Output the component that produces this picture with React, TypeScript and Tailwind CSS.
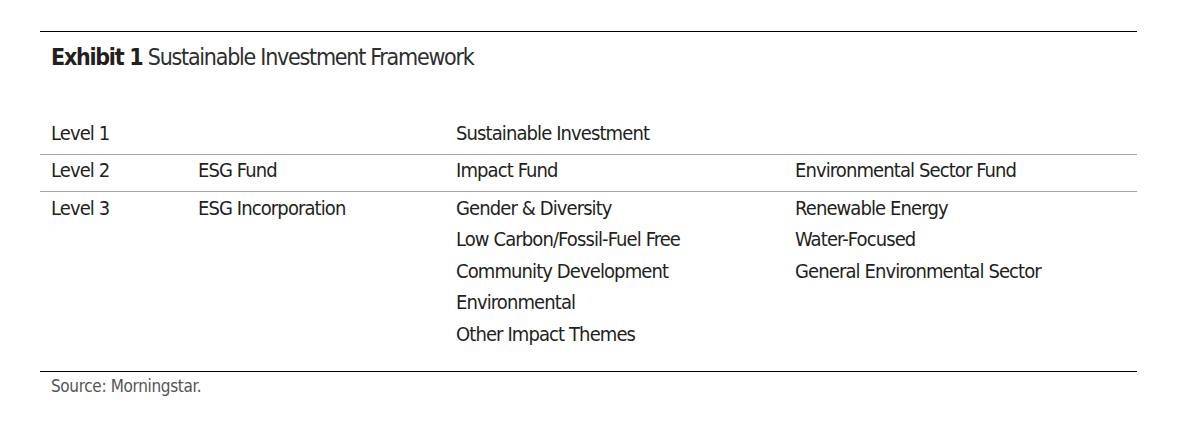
const FONT = "font-['Liberation_Sans_Narrow','DejaVu_Sans_Condensed',Roboto,sans-serif] font-stretch-condensed";

const LEVEL3_IMPACT = [
  "Gender & Diversity",
  "Low Carbon/Fossil-Fuel Free",
  "Community Development",
  "Environmental",
  "Other Impact Themes",
];

const LEVEL3_SECTOR = [
  "Renewable Energy",
  "Water-Focused",
  "General Environmental Sector",
];

function Lines({ items }: { items: string[] }) {
  return (
    <div className="flex flex-col">
      {items.map((item) => (
        <div key={item}>{item}</div>
      ))}
    </div>
  );
}

export default function App() {
  return (
    <div className={`h-[430px] w-[1201px] bg-white ${FONT} text-[#231f20]`}>
      <div className="ml-[40px] w-[1097px] pt-[31px]">
        <div className="border-t border-black pl-[11px] pt-[10px] text-[23px] leading-[30px] tracking-[-1.25px]">
          <span className="font-bold">Exhibit 1</span>{" "}
          <span className="text-[#2e2e2e]">Sustainable Investment Framework</span>
        </div>

        <div className="mt-[46px] text-[20px] leading-[31.5px] tracking-[-0.9px]">
          <div className="grid grid-cols-[147px_258px_339px_1fr] pb-[4.5px] pl-[11px]">
            <div>Level 1</div>
            <div />
            <div>Sustainable Investment</div>
            <div />
          </div>
          <div className="grid grid-cols-[147px_258px_339px_1fr] border-t border-[#a6a6a6] pb-[4px] pl-[11px]">
            <div>Level 2</div>
            <div>ESG Fund</div>
            <div>Impact Fund</div>
            <div>Environmental Sector Fund</div>
          </div>
          <div className="grid grid-cols-[147px_258px_339px_1fr] border-t border-[#a6a6a6] pb-[21px] pl-[11px] pt-[1px]">
            <div>Level 3</div>
            <div>ESG Incorporation</div>
            <Lines items={LEVEL3_IMPACT} />
            <Lines items={LEVEL3_SECTOR} />
          </div>
        </div>

        <div className="border-t border-black pl-[11px] pt-[1px] text-[17px] leading-[26px] tracking-[-0.35px] text-[#555]">
          Source: Morningstar.
        </div>
      </div>
    </div>
  );
}
